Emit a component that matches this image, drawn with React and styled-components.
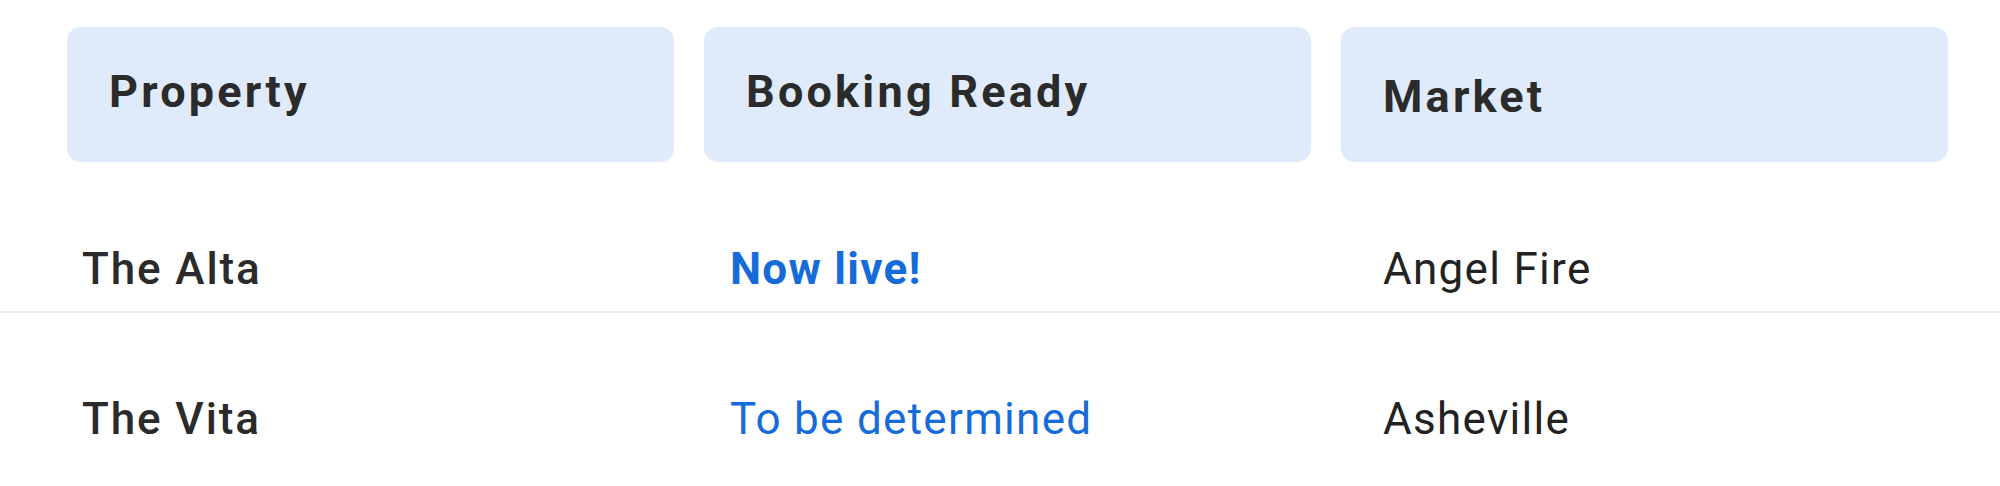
import React from 'react';
import styled, { createGlobalStyle } from 'styled-components';

const GlobalStyle = createGlobalStyle`
    html, body {
        margin: 0;
        padding: 0;
        background: #ffffff;
    }
    body {
        font-family: Roboto, "Liberation Sans", Arial, sans-serif;
        color: #2b2b2b;
    }
`

const rows = [
    { property: 'The Alta', status: 'Now live!', live: true, market: 'Angel Fire' },
    { property: 'The Vita', status: 'To be determined', live: false, market: 'Asheville' },
]

const App = () => {
  return (
    <>
      <GlobalStyle />
      <Table>
          <HeaderRow>
              <HeaderCell><HeaderText>Property</HeaderText></HeaderCell>
              <HeaderCell><HeaderText>Booking Ready</HeaderText></HeaderCell>
              <HeaderCell><HeaderText lower>Market</HeaderText></HeaderCell>
          </HeaderRow>

          {rows.map((row, i) => (
              <Row key={row.property} divider={i < rows.length - 1}>
                  <PropertyName>{row.property}</PropertyName>
                  <Status live={row.live}>{row.status}</Status>
                  <Market>{row.market}</Market>
              </Row>
          ))}
      </Table>
    </>
  )
};

export default App;

const Table = styled.div`
    width: 2000px;
    height: 486px;
    overflow: hidden;
`
const HeaderRow = styled.div`
    display: grid;
    grid-template-columns: 607px 607px 607px;
    column-gap: 30px;
    padding: 27px 0 0 67px;
    margin-bottom: 1px;
`
const HeaderCell = styled.div`
    height: 135px;
    background-color: #dfebfb;
    border-radius: 14px;
    padding-left: 42px;
    box-sizing: border-box;
`
const HeaderText = styled.div`
    font-size: 45px;
    font-weight: 700;
    line-height: 53px;
    letter-spacing: 3.2px;
    padding-top: ${props => props.lower ? '43px' : '38px'};
    color: #2b2b2b;
`
const Row = styled.div`
    display: grid;
    grid-template-columns: 648px 653px 1fr;
    padding: 80px 0 16px 82px;
    border-bottom: ${props => props.divider ? '2px solid #ececec' : 'none'};
    font-size: 44px;
    line-height: 52px;
    letter-spacing: 1.3px;
`
const PropertyName = styled.div`
    font-weight: 500;
    letter-spacing: 1.9px;
    color: #2b2b2b;
`
const Status = styled.div`
    font-weight: ${props => props.live ? 700 : 400};
    color: #166bdb;
`
const Market = styled.div`
    font-weight: 400;
    color: #222222;
`
